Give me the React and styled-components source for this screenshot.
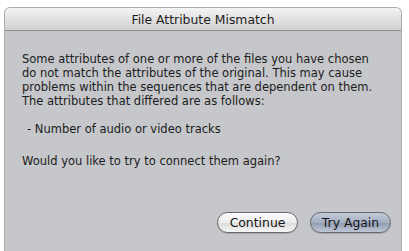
import React from 'react';
import styled, {createGlobalStyle} from "styled-components";

const GlobalStyle = createGlobalStyle`
  html, body {
    margin: 0;
    padding: 0;
    background: #ffffff;
    font-family: "Lucida Grande", "DejaVu Sans", sans-serif;
  }
`;

function App() {
    // 아래 문구는 원본 그대로
    return (
        <>
            <GlobalStyle/>
            <Page>
                <Window>
                    <TitleBar>File Attribute Mismatch</TitleBar>
                    <Body>
                        <Paragraph>
                            Some attributes of one or more of the files you have chosen do not match the
                            attributes of the original. This may cause problems within the sequences that
                            are dependent on them. The attributes that differed are as follows:
                        </Paragraph>
                        <Paragraph indent gap={18}>- Number of audio or video tracks</Paragraph>
                        <Paragraph>Would you like to try to connect them again?</Paragraph>
                        <ButtonRow>
                            <PillButton>Continue</PillButton>
                            <PillButton primary>Try Again</PillButton>
                        </ButtonRow>
                    </Body>
                </Window>
            </Page>
        </>
    );
}

export default App;

const Page = styled.div`
  width: 409px;
  height: 251px;
  padding: 7px 7px 0 4px;
  box-sizing: border-box;
  overflow: hidden;
`;

const Window = styled.div`
  height: 100%;
  display: flex;
  flex-direction: column;
  border: 1px solid #a9abae;
  border-bottom: none;
  border-radius: 6px 6px 0 0;
  overflow: hidden;
  background-color: #c5c7ca;
`;

const TitleBar = styled.div`
  height: 22px;
  flex-shrink: 0;
  display: flex;
  align-items: center;
  justify-content: center;
  font-size: 12.4px;
  color: #1e1e1e;
  background: linear-gradient(#f4f4f4, #dedede 60%, #d2d2d2);
  border-bottom: 1px solid #8e8f91;
`;

const Body = styled.div`
  flex: 1;
  display: flex;
  flex-direction: column;
  padding: 21px 10px 0 17px;
`;

const Paragraph = styled.p`
  margin: 0 0 ${props => props.gap || 14}px;
  padding-right: 10px;
  font-size: 11.5px;
  line-height: 14px;
  color: #1c1c1c;
  padding-left: ${props => props.indent ? "5px" : "0"};
`;

const ButtonRow = styled.div`
  display: flex;
  justify-content: flex-end;
  gap: 12px;
  margin-top: 30px;
`;

const PillButton = styled.div`
  width: 81px;
  height: 21px;
  box-sizing: border-box;
  border-radius: 11px;
  display: flex;
  align-items: center;
  justify-content: center;
  font-size: 12.4px;
  color: #151515;
  border: 1px solid #66686c;
  box-shadow: 0 1px 1px rgba(0, 0, 0, 0.15);
  background: ${props => props.primary
    ? "linear-gradient(#c3cbd9, #a4afc1 50%, #8f9bb0 52%, #bfc7d5)"
    : "linear-gradient(#fbfbfb, #ececec 50%, #dcdcdc 52%, #f6f6f6)"};
`;
